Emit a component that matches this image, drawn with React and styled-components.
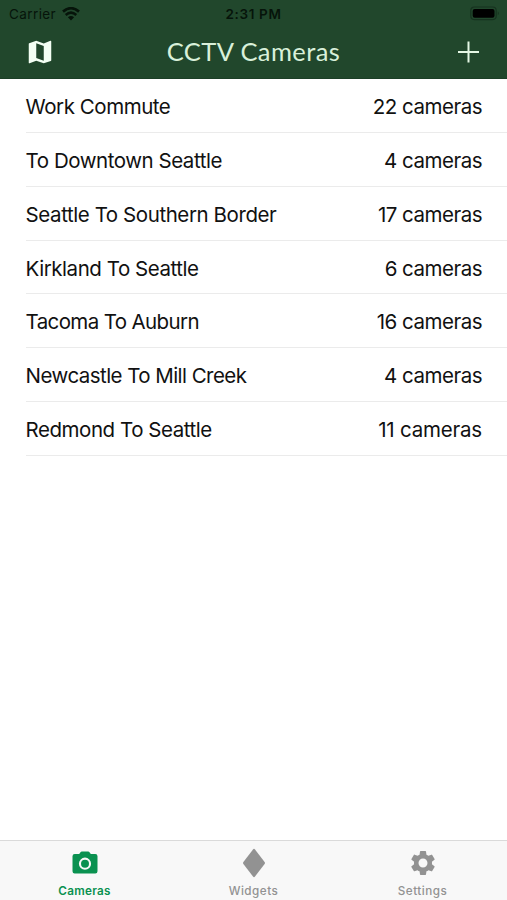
import styled, { createGlobalStyle } from "styled-components";
import { MdMap, MdSettings } from "react-icons/md";

const GlobalStyle = createGlobalStyle`
    * {
        box-sizing: border-box;
        margin: 0;
        padding: 0;
    }
    body {
        background-color: #fff;
        font-family: Inter, "Liberation Sans", sans-serif;
    }
`;

const Screen = styled.div`
    display: flex;
    flex-direction: column;
    width: 507px;
    height: 900px;
    overflow: hidden;
    background-color: #fff;
`;

const Header = styled.header`
    height: 79px;
    flex: none;
    background-color: #21472c;
    border-bottom: 1px solid #1c3f27;
`;

const StatusBar = styled.div`
    display: grid;
    grid-template-columns: 1fr auto 1fr;
    align-items: center;
    height: 27px;
    padding: 0 6px 0 9px;
    font-size: 13.5px;
    color: #06140a;
    .carrier {
        display: flex;
        align-items: center;
        gap: 6px;
        letter-spacing: 0.4px;
    }
    .time {
        font-weight: 600;
        letter-spacing: 0.65px;
        margin-right: 3px;
    }
    .battery {
        justify-self: end;
    }
    svg {
        display: block;
    }
`;

const NavBar = styled.div`
    display: grid;
    grid-template-columns: 1fr auto 1fr;
    align-items: center;
    height: 50px;
    padding: 0 27px 0 25px;
    color: #f4fff4;
    svg {
        display: block;
    }
    svg:last-child {
        justify-self: end;
    }
`;

const Title = styled.h1`
    font-family: Lato, sans-serif;
    font-size: 25.5px;
    font-weight: 400;
    line-height: 32px;
    padding: 0 0 2px 2px;
    letter-spacing: 0.4px;
    color: #d9f0da;
`;

const List = styled.ul`
    flex: 1;
    list-style: none;
    padding: 0.4px 0 0 25.6px;
`;

const Row = styled.li`
    display: flex;
    justify-content: space-between;
    align-items: center;
    height: 53.75px;
    padding: 2px 25px 0 0;
    border-bottom: 1.5px solid #ebebeb;
    font-size: 20.5px;
    color: #111;
`;

const Label = styled.span`
    display: block;
    white-space: nowrap;
    letter-spacing: ${({ $spacing }) => $spacing || "-0.46px"};
`;

const TabBar = styled.nav`
    display: grid;
    grid-template-columns: repeat(3, 1fr);
    flex: none;
    height: 60px;
    background-color: #f8f8f8;
    border-top: 1px solid #dadada;
`;

const Tab = styled.div`
    display: flex;
    flex-direction: column;
    align-items: center;
    padding-top: 7px;
    font-size: 11.7px;
    font-weight: ${({ $active }) => ($active ? 600 : 500)};
    line-height: 16px;
    letter-spacing: ${({ $active }) => ($active ? "0.3px" : "0.5px")};
    color: ${({ $active }) => ($active ? "#0a9150" : "#929292")};
    svg {
        display: block;
        height: 30px;
        margin-bottom: 5px;
    }
`;

const routes = [
    { name: "Work Commute", count: 22 },
    { name: "To Downtown Seattle", count: 4 },
    { name: "Seattle To Southern Border", count: 17, spacing: "-0.42px" },
    { name: "Kirkland To Seattle", count: 6 },
    { name: "Tacoma To Auburn", count: 16, spacing: "-0.62px" },
    { name: "Newcastle To Mill Creek", count: 4, spacing: "-0.55px" },
    { name: "Redmond To Seattle", count: 11 },
];

const WifiIcon = () => (
    <svg width="18" height="14" viewBox="0 0 18 14" fill="none">
        <path d="M1 4.6Q9-2.2 17 4.6" stroke="currentColor" strokeWidth="2.7" />
        <path d="M3.7 8Q9 3.2 14.3 8" stroke="currentColor" strokeWidth="2.5" />
        <path d="M9 13.6L5.9 10.3Q9 7.8 12.1 10.3Z" fill="currentColor" />
    </svg>
);

const BatteryIcon = () => (
    <svg className="battery" width="31" height="15" viewBox="0 0 31 15">
        <rect
            x="0.8"
            y="1"
            width="25.4"
            height="12.6"
            rx="3.5"
            fill="none"
            stroke="#16321f"
            strokeWidth="1.2"
        />
        <rect x="2.7" y="3" width="21.8" height="8.8" rx="2" fill="#000" />
        <path d="M27.8 5.3q2 2 0 4z" fill="#16321f" />
    </svg>
);

const PlusIcon = () => (
    <svg width="22" height="22" viewBox="0 0 22 22">
        <path d="M10.5 0.5v21M0 11h21" stroke="#e4f7e4" strokeWidth="2" />
    </svg>
);

const CameraIcon = () => (
    <svg width="26" height="30" viewBox="0 0 26 30" fill="currentColor">
        <path
            fillRule="evenodd"
            d="M2.7 6H7.2L8.5 4.2q.5-.7 1.3-.7h6.4q.8 0 1.3.7L18.800 6h4.500q2.200 0 2.200 2.200v15q0 2.200-2.200 2.200H2.700Q.5 25.400.5 23.200v-15Q.5 6 2.700 6zM13 9.600a6.100 6.100 0 1 0 0 12.200 6.100 6.100 0 0 0 0-12.200z"
        />
        <circle cx="13" cy="15.700" r="4" />
    </svg>
);

const DiamondIcon = () => (
    <svg width="24" height="30" viewBox="0 0 24 30" fill="currentColor">
        <path d="M11 1.4q1-1.2 2 0l9.600 12.600q.7 1 0 2L13 28.600q-1 1.200-2 0L1.400 16q-.7-1 0-2z" />
    </svg>
);

const App = () => {
    return (
        <>
            <GlobalStyle />
            <Screen>
                <Header>
                    <StatusBar>
                        <div className="carrier">
                            Carrier
                            <WifiIcon />
                        </div>
                        <span className="time">2:31 PM</span>
                        <BatteryIcon />
                    </StatusBar>
                    <NavBar>
                        <MdMap size={30} />
                        <Title>CCTV Cameras</Title>
                        <PlusIcon />
                    </NavBar>
                </Header>
                <List>
                    {routes.map(({ name, count, spacing }) => (
                        <Row key={name}>
                            <Label $spacing={spacing}>{name}</Label>
                            <Label $spacing={count === 11 ? "-0.2px" : "-0.5px"}>
                                {count} cameras
                            </Label>
                        </Row>
                    ))}
                </List>
                <TabBar>
                    <Tab $active>
                        <CameraIcon />
                        Cameras
                    </Tab>
                    <Tab>
                        <DiamondIcon />
                        Widgets
                    </Tab>
                    <Tab>
                        <MdSettings size={30} />
                        Settings
                    </Tab>
                </TabBar>
            </Screen>
        </>
    );
};

export default App;
